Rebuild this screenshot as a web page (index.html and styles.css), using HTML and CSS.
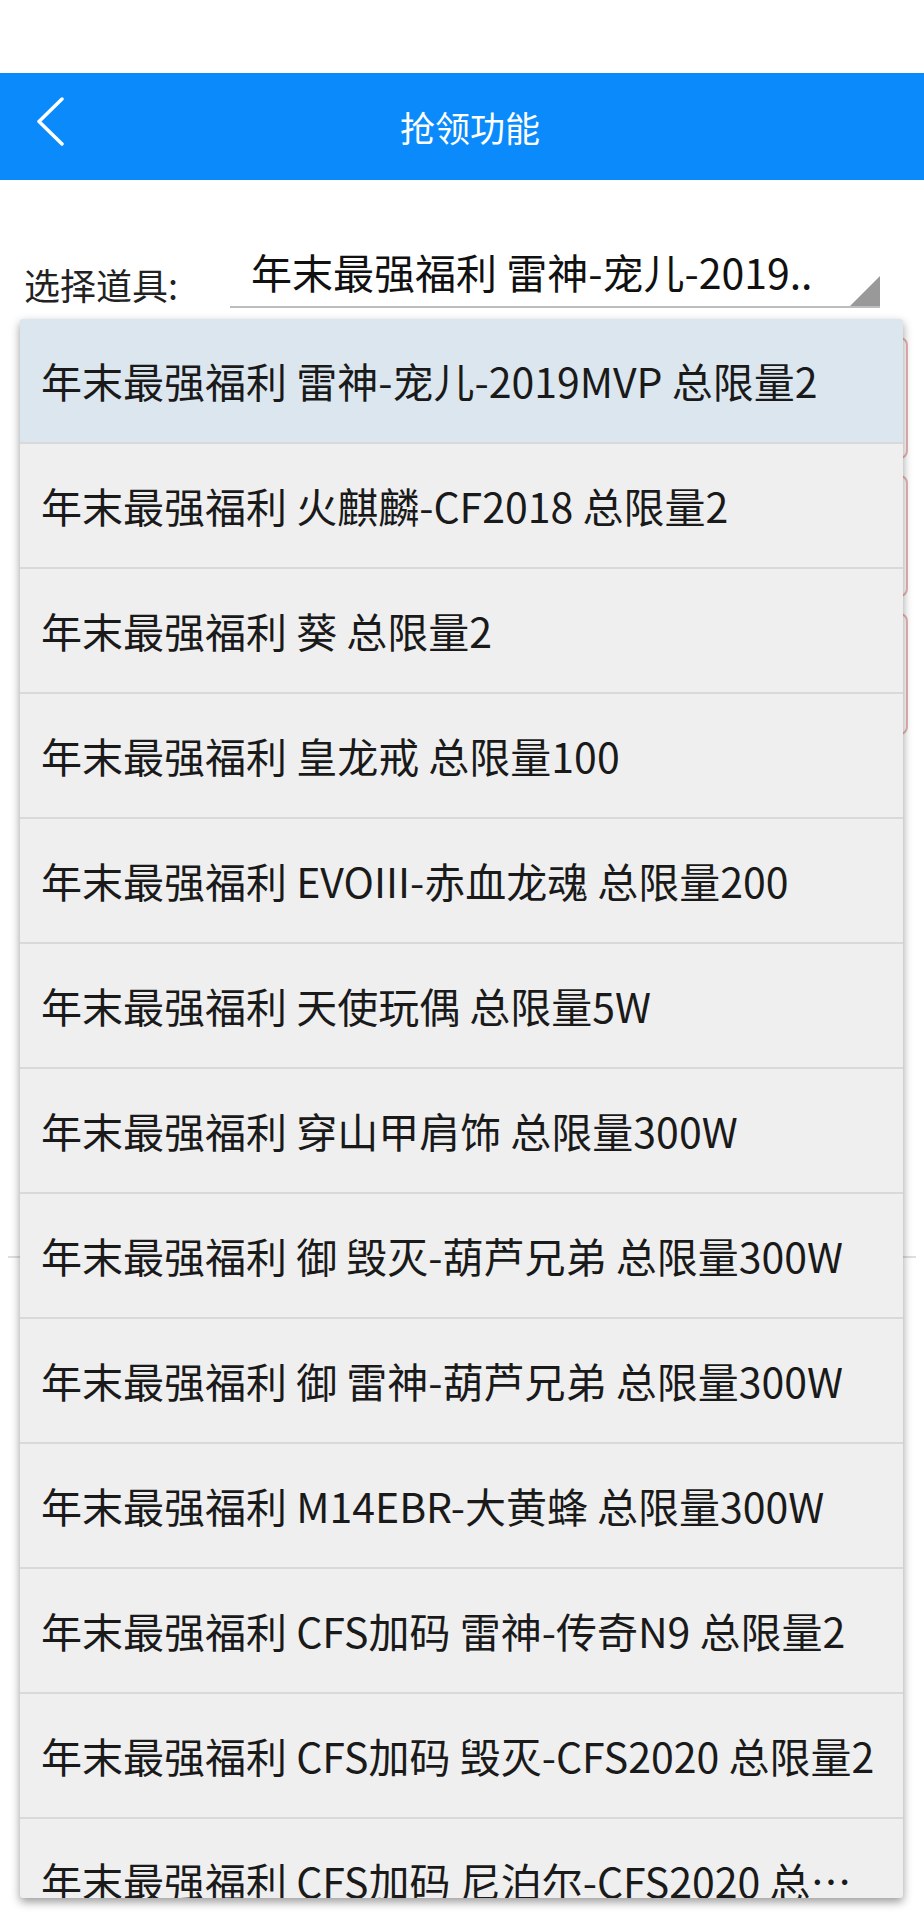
FILE: index.html
```html
<!DOCTYPE html>
<html lang="zh-CN">
<head>
    <meta charset="UTF-8">
    <meta name="viewport" content="width=device-width, initial-scale=1.0">
    <title>抢领功能</title>
    <link rel="stylesheet" href="styles.css">
</head>
<body>

    <div class="page">
        <div class="status"></div>

        <header class="topbar">
            <a class="back" href="#">
                <svg width="30" height="50" viewBox="0 0 30 50">
                    <path d="M26 2 L3 24.5 L26 47" fill="none" stroke="#fff" stroke-width="3.5" stroke-linecap="round" stroke-linejoin="round"/>
                </svg>
            </a>
            <h1>抢领功能</h1>
            <span></span>
        </header>

        <div class="form">
            <div class="row">
                <label class="label">选择道具:</label>
                <div class="select">
                    <span class="value">年末最强福利 雷神-宠儿-2019..</span>
                    <span class="arrow"></span>
                </div>
            </div>

            <div class="fields">
                <div class="field"></div>
                <div class="field"></div>
                <div class="field"></div>
            </div>

            <div class="divider"></div>
        </div>

        <ul class="dropdown" id="dropdown">
            <!-- 道具列表由脚本生成 -->
        </ul>
    </div>

    <script>
        // 可选道具
        const items = [
            "年末最强福利 雷神-宠儿-2019MVP 总限量2",
            "年末最强福利 火麒麟-CF2018 总限量2",
            "年末最强福利 葵 总限量2",
            "年末最强福利 皇龙戒 总限量100",
            "年末最强福利 EVOIII-赤血龙魂 总限量200",
            "年末最强福利 天使玩偶 总限量5W",
            "年末最强福利 穿山甲肩饰 总限量300W",
            "年末最强福利 御 毁灭-葫芦兄弟 总限量300W",
            "年末最强福利 御 雷神-葫芦兄弟 总限量300W",
            "年末最强福利 M14EBR-大黄蜂 总限量300W",
            "年末最强福利 CFS加码 雷神-传奇N9 总限量2",
            "年末最强福利 CFS加码 毁灭-CFS2020 总限量2",
            "年末最强福利 CFS加码 尼泊尔-CFS2020 总限量2"
        ];

        const dropdown = document.getElementById('dropdown');
        items.forEach((text, index) => {
            const li = document.createElement('li');
            li.className = index === 0 ? 'option selected' : 'option';
            li.textContent = text;
            dropdown.appendChild(li);
        });
    </script>

</body>
</html>
```

FILE: styles.css
```css
body {
    margin: 0;
    background-color: #fff;
    font-family: "Noto Sans CJK SC", sans-serif;
    color: #1a1a1a;
}
.page {
    position: relative;
    width: 924px;
    height: 1920px;
    overflow: hidden;
}
.status {
    height: 73px;
}
.topbar {
    display: grid;
    grid-template-columns: 100px 1fr 100px;
    align-items: center;
    height: 107px;
    background-color: #0b8bfb;
}
.back {
    display: flex;
    padding-left: 36px;
    margin-top: -10px;
}
.topbar h1 {
    margin: 0;
    padding-left: 16px;
    text-align: center;
    color: #fff;
    font-size: 35px;
    font-weight: normal;
    line-height: 1;
}
.row {
    display: flex;
    margin-top: 60px;
    padding: 0 44px 0 24px;
}
.label {
    flex: none;
    width: 206px;
    align-self: flex-end;
    margin-bottom: 6px;
    font-size: 36px;
    line-height: 36px;
    color: #222;
}
.select {
    flex: 1;
    display: flex;
    height: 66px;
    border-bottom: 2px solid #bdbdbd;
}
.value {
    flex: 1;
    padding-left: 21px;
    font-size: 41px;
    line-height: 62px;
    color: #111;
    white-space: nowrap;
}
.arrow {
    align-self: flex-end;
    width: 0;
    height: 0;
    border-left: 30px solid transparent;
    border-bottom: 30px solid #999;
}
.fields {
    display: flex;
    flex-direction: column;
    gap: 16px;
    margin: 29px 16px 0 230px;
}
.field {
    height: 118px;
    border: 2px solid #e8b4b4;
    border-radius: 8px;
}
.divider {
    height: 2px;
    margin: 521px 8px 0;
    background-color: #dedede;
}
.dropdown {
    position: absolute;
    top: 319px;
    left: 20px;
    width: 883px;
    height: 1579px;
    margin: 0;
    padding: 0;
    list-style: none;
    overflow: hidden;
    background-color: #efefef;
    border-radius: 3px;
    box-shadow: 0 4px 10px rgba(0, 0, 0, 0.4);
}
.option {
    height: 123px;
    padding: 0 22px 0 21px;
    border-bottom: 2px solid #d9d9d9;
    font-size: 41px;
    line-height: 123px;
    white-space: nowrap;
    overflow: hidden;
    text-overflow: ellipsis;
}
.option.selected {
    background-color: #dce6ee;
}
```
